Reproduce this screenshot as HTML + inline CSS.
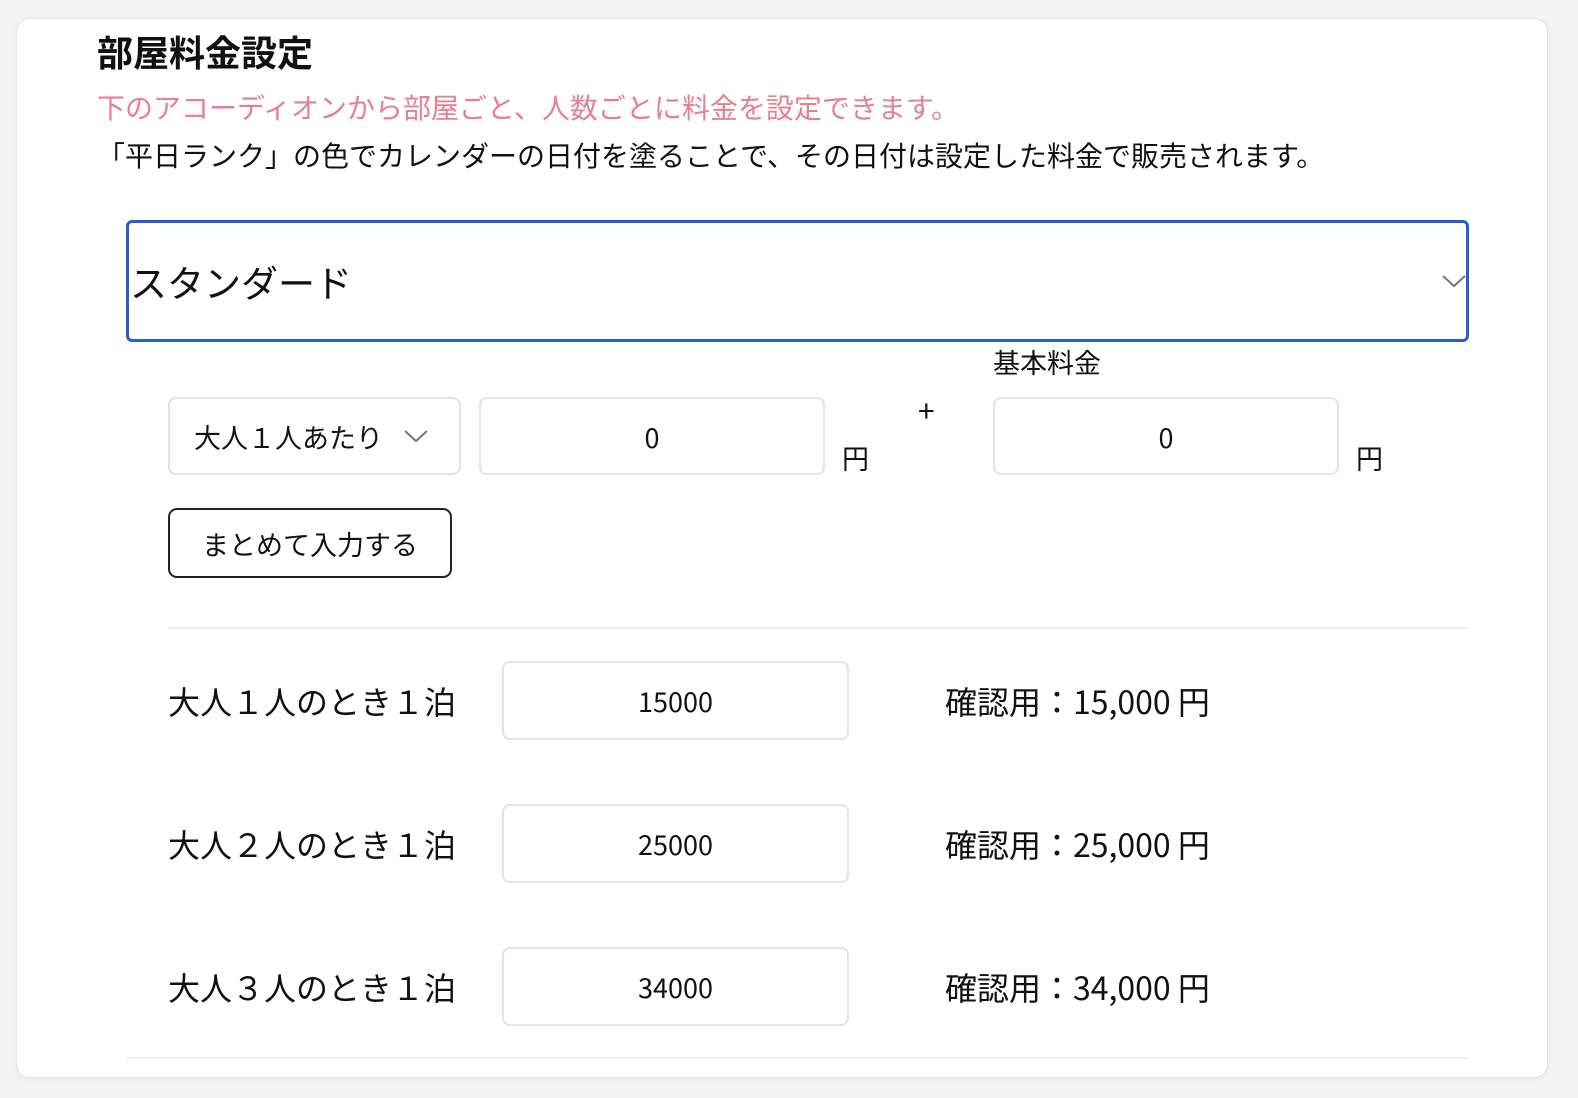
<!DOCTYPE html>
<html><head><meta charset="utf-8"><style>
*{margin:0;padding:0;box-sizing:border-box}
body{width:1578px;height:1098px;background:#f4f4f4;position:relative;overflow:hidden;font-family:"Noto Sans CJK JP","Liberation Sans",sans-serif;color:#111}
.card{position:absolute;left:16px;top:18px;width:1532px;height:1060px;background:#fff;border:1px solid #e2e2e2;border-radius:14px;box-shadow:0 2px 8px rgba(0,0,0,.06)}
.a{position:absolute;white-space:nowrap;line-height:1}
.box{position:absolute;border:2px solid #e2e2e2;border-radius:8px;background:#fff;display:flex;align-items:center;justify-content:center;font-size:27px}
.hr{position:absolute;height:2px;background:#eee}
</style></head><body>
<div class="card"></div>
<div class="a" style="left:97px;top:33px;font-size:36px;font-weight:bold">部屋料金設定</div>
<div class="a" style="left:97px;top:93px;font-size:28px;color:#e57f93">下のアコーディオンから部屋ごと、人数ごとに料金を設定できます。</div>
<div class="a" style="left:97px;top:141px;font-size:28px">「平日ランク」の色でカレンダーの日付を塗ることで、その日付は設定した料金で販売されます。</div>
<div style="position:absolute;left:126px;top:220px;width:1343px;height:122px;border:3px solid #2a5fc9;border-radius:6px"></div>
<div class="a" style="left:130px;top:263px;font-size:37px">スタンダード</div>
<svg style="position:absolute;left:1441px;top:273px" width="26" height="16"><path d="M2 3 L13 13 L24 3" fill="none" stroke="#777" stroke-width="2"/></svg>
<div class="a" style="left:993px;top:348px;font-size:27px">基本料金</div>
<div class="box" style="left:168px;top:397px;width:293px;height:78px;justify-content:flex-start;padding-left:24px">大人１人あたり<svg style="margin-left:20px" width="26" height="16"><path d="M2 3 L13 13 L24 3" fill="none" stroke="#777" stroke-width="2"/></svg></div>
<div class="box" style="left:479px;top:397px;width:346px;height:78px">0</div>
<div class="a" style="left:842px;top:444px;font-size:27px">円</div>
<div class="a" style="left:918px;top:394px;font-size:30px">+</div>
<div class="box" style="left:993px;top:397px;width:346px;height:78px">0</div>
<div class="a" style="left:1356px;top:444px;font-size:27px">円</div>
<div class="box" style="left:168px;top:508px;width:284px;height:70px;border-color:#222;border-radius:9px;font-size:27px">まとめて入力する</div>
<div class="hr" style="left:168px;top:627px;width:1300px"></div>
<div class="a" style="left:168px;top:685px;font-size:32px">大人１人のとき１泊</div>
<div class="box" style="left:502px;top:661px;width:347px;height:79px">15000</div>
<div class="a" style="left:945px;top:685px;font-size:32px">確認用：15,000 円</div>
<div class="a" style="left:168px;top:828px;font-size:32px">大人２人のとき１泊</div>
<div class="box" style="left:502px;top:804px;width:347px;height:79px">25000</div>
<div class="a" style="left:945px;top:828px;font-size:32px">確認用：25,000 円</div>
<div class="a" style="left:168px;top:971px;font-size:32px">大人３人のとき１泊</div>
<div class="box" style="left:502px;top:947px;width:347px;height:79px">34000</div>
<div class="a" style="left:945px;top:971px;font-size:32px">確認用：34,000 円</div>
<div class="hr" style="left:127px;top:1057px;width:1341px"></div>
</body></html>
